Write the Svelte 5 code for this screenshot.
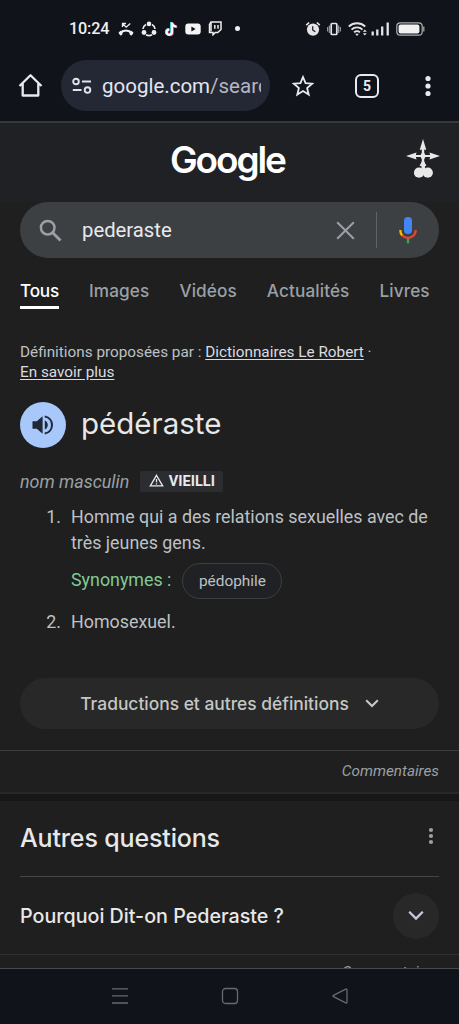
<script>
  const url = { host: 'google.com', path: '/searc' };
  const query = 'pederaste';
  const tabCount = 5;

  const tabs = [
    { id: 'all', label: 'Tous' },
    { id: 'images', label: 'Images' },
    { id: 'videos', label: 'Vidéos' },
    { id: 'news', label: 'Actualités' },
    { id: 'books', label: 'Livres' }
  ];
  let activeTab = $state('all');
</script>

<div class="screen">
  <div class="status-bar">
    <span class="clock">10:24</span>
    <div class="notifications">
      <svg width="16" height="16" viewBox="0 0 16 16">
        <path d="M1.500 12.300c4-3.500 9-3.500 13 0" fill="none" stroke="#eee" stroke-width="2.200" />
        <path d="M.5 11.800l2-2 2.300 1.600-.8 2.600-1.800.6zM15.500 11.800l-2-2-2.300 1.600.8 2.600 1.800.6z" fill="#eee" />
        <path d="M4.500 6V2.500H8M4.700 2.700L8.200 6.200 12.300 2.500" fill="none" stroke="#eee" stroke-width="1.300" />
      </svg>
      <svg width="16" height="16" viewBox="0 0 16 16">
        <path d="M5 3.500a6 6 0 0 0-3 4.500M11 3.500a6 6 0 0 1 3 4.500M5 13.800a6 6 0 0 0 6 0" fill="none" stroke="#eee" stroke-width="1.600" />
        <circle cx="8" cy="2.900" r="2.300" fill="#eee" />
        <circle cx="3" cy="11.500" r="2.400" fill="#eee" />
        <circle cx="13" cy="11.500" r="2.400" fill="#eee" />
      </svg>
      <svg width="14" height="16" viewBox="0 0 14 16">
        <path d="M7.200 1v9.700a2.600 2.600 0 1 1-2.600-2.600M7.200 1.500c.4 2.300 2 3.500 4.500 3.700" fill="none" stroke="#35d5d5" stroke-width="2.300" />
        <path d="M8.800 1.800v9.700a2.600 2.600 0 1 1-2.600-2.600M8.800 2.300c.4 2.300 2 3.500 4.500 3.700" fill="none" stroke="#d9365e" stroke-width="2.300" />
        <path d="M8 1.400v9.700a2.700 2.700 0 1 1-2.700-2.700M8 1.900c.4 2.300 2 3.500 4.500 3.700" fill="none" stroke="#fff" stroke-width="2.200" />
      </svg>
      <svg width="16" height="12" viewBox="0 0 16 12">
        <rect x=".3" y=".5" width="15.400" height="11" rx="3" fill="#f4f4f4" />
        <path d="M6.400 3.500v5l4.200-2.500z" fill="#10131a" />
      </svg>
      <svg width="14" height="15" viewBox="0 0 14 15">
        <path d="M3 1h10v7.500L9.800 11.500H7.300L5 13.800v-2.300H1.500V3.500z" fill="none" stroke="#eee" stroke-width="1.500" />
        <path d="M3 1.500v9M6.800 4v3.800M10 4v3.800" stroke="#eee" stroke-width="1.500" />
      </svg>
      <span class="dot"></span>
    </div>
    <div class="system">
      <svg width="16" height="16" viewBox="0 0 16 16">
        <circle cx="8" cy="8.600" r="6.100" fill="#e4e4e6" />
        <path d="M1.200 4.200l3-2.700M14.800 4.200l-3-2.700" stroke="#e4e4e6" stroke-width="1.600" />
        <path d="M7.700 5.300v3.700l2.600 1.700" fill="none" stroke="#10131a" stroke-width="1.200" />
      </svg>
      <svg width="14" height="14" viewBox="0 0 14 14">
        <rect x="4.200" y="1.500" width="5.600" height="11" rx=".8" fill="none" stroke="#e4e4e6" stroke-width="1.700" />
        <path d="M.7 5v4.500M13.300 5v4.500M2.300 3.500v7.500M11.700 3.500v7.500" stroke="#c4c4c6" stroke-width=".9" />
      </svg>
      <svg width="20" height="16" viewBox="0 0 20 16">
        <path d="M.8 5.500a12 12 0 0 1 16.400 0M3.500 8.600a8 8 0 0 1 11 0M6.100 11.400a4.200 4.200 0 0 1 5.800 0" fill="none" stroke="#e4e4e6" stroke-width="1.900" />
        <path d="M7.200 12.800h3.600L9 15z" fill="#e4e4e6" />
        <path d="M14.800 10.800h4l-2-2.300zM14.800 12.300h4l-2 2.300z" fill="#e4e4e6" />
      </svg>
      <svg width="19" height="14" viewBox="0 0 19 14">
        <path d="M1.700 9.500v4M6.300 7.500v6M11.200 4.500v9M16.700.5v13" stroke="#e4e4e6" stroke-width="2.300" />
      </svg>
      <svg width="29" height="14" viewBox="0 0 29 14">
        <rect x=".8" y=".8" width="25.400" height="12.400" rx="3.500" fill="none" stroke="#aeb0b5" stroke-width="1.200" />
        <rect x="2.600" y="2.600" width="20.800" height="8.800" rx="2" fill="#f1f1f1" />
        <path d="M27.800 4.500v5" stroke="#aeb0b5" stroke-width="1.200" />
      </svg>
    </div>
  </div>

  <div class="toolbar">
    <svg width="25" height="25" viewBox="0 0 25 25">
      <path d="M1.500 13L12.500 2.300 23.500 13M4.700 10.500v12h15.600v-12" fill="none" stroke="#e7eaf3" stroke-width="2.300" stroke-linejoin="round" />
    </svg>
    <div class="url-bar">
      <svg width="20" height="18" viewBox="0 0 20 18">
        <g fill="none" stroke="#e0e3ec" stroke-width="1.900">
          <circle cx="4" cy="4.500" r="2.800" />
          <circle cx="15.500" cy="13" r="2.800" />
          <path d="M10 4.500h9M.8 13h8.700" />
        </g>
      </svg>
      <span class="url">{url.host}<span class="path">{url.path}</span></span>
    </div>
    <svg class="star" width="24" height="24" viewBox="0 0 24 24">
      <path d="M12 3l2.550 6.200 6.600.5-5.050 4.350 1.600 6.500L12 17.100l-5.700 3.450 1.600-6.500L2.850 9.700l6.600-.5z" fill="none" stroke="#e7eaf3" stroke-width="1.800" />
    </svg>
    <div class="tab-count">{tabCount}</div>
    <svg class="menu" width="6" height="22" viewBox="0 0 6 22">
      <g fill="#e7eaf3">
        <circle cx="3" cy="3.500" r="2.600" />
        <circle cx="3" cy="11" r="2.600" />
        <circle cx="3" cy="18.500" r="2.600" />
      </g>
    </svg>
  </div>

  <div class="page">
    <header class="masthead">
      <div class="logo">Google</div>
      <svg width="34" height="40" viewBox="0 0 34 40">
        <g fill="#e8e8e8">
          <path d="M17 0l3.300 11-2.100-.6V28h-2.400V10.400l-2.100.6z" />
          <path d="M0 17l10.500-3.600-.6 2.500h14.200l-.6-2.500L34 17l-10.500 3.600.6-2.500H9.900l.6 2.500z" />
          <path d="M17 12l3 5-3 5-3-5zM17 20l3.500 7h-7z" />
          <circle cx="13" cy="33.700" r="5.100" />
          <circle cx="21.800" cy="33.700" r="5.100" />
          <path d="M15.500 26h3.500v10h-3.500z" />
        </g>
      </svg>
    </header>

    <div class="search">
      <svg width="23" height="23" viewBox="0 0 23 23">
        <circle cx="8.700" cy="8.700" r="6.800" fill="none" stroke="#9aa0a6" stroke-width="2.500" />
        <path d="M13.500 13.500l8 8" stroke="#9aa0a6" stroke-width="2.800" />
      </svg>
      <span class="query">{query}</span>
      <svg width="19" height="19" viewBox="0 0 19 19">
        <path d="M1.200 1.200l16.600 16.600M17.800 1.200L1.200 17.800" stroke="#9aa0a6" stroke-width="2" />
      </svg>
      <span class="separator"></span>
      <svg width="18" height="27" viewBox="0 0 18 27">
        <path d="M9 20v6.300" stroke="#34a853" stroke-width="2.300" />
        <path d="M1.300 13a7.800 7.800 0 0 0 2.200 5.700" fill="none" stroke="#fbbc04" stroke-width="2.300" />
        <path d="M3.200 18.300A7.800 7.800 0 0 0 16.700 13" fill="none" stroke="#ea4335" stroke-width="2.300" />
        <rect x="5" y="0" width="8" height="17" rx="4" fill="#4285f4" />
      </svg>
    </div>

    <nav class="tabs">
      {#each tabs as tab}
        <button class="tab" class:active={tab.id === activeTab} onclick={() => (activeTab = tab.id)}>{tab.label}</button>
      {/each}
    </nav>

    <section class="definition">
      <p class="source">
        Définitions proposées par : <a href="#robert">Dictionnaires Le Robert</a> ·<br />
        <a href="#more">En savoir plus</a>
      </p>

      <div class="word-row">
        <button class="speaker" aria-label="Écouter">
          <svg width="24" height="24" viewBox="0 0 24 24">
            <path d="M1.500 8.300v7.400h4.300l5.800 5V3.300l-5.800 5z" fill="#202735" />
            <path d="M13.800 7.500c4 1.700 4 7.300 0 9z" fill="#202735" />
            <path d="M13.800 3.500c9.600 1.500 9.600 15.500 0 17" fill="none" stroke="#202735" stroke-width="2" />
          </svg>
        </button>
        <h1>pédéraste</h1>
      </div>

      <div class="grammar">
        <em>nom masculin</em>
        <span class="badge">
          <svg width="15" height="14" viewBox="0 0 15 14">
            <path d="M7.500 1.300L13.700 11.800H1.300z" fill="none" stroke="#e8eaed" stroke-width="1.300" />
            <path d="M7.500 5v3.300M7.500 9.200v1.300" stroke="#e8eaed" stroke-width="1.300" />
          </svg>
          <b>VIEILLI</b>
        </span>
      </div>

      <div class="senses">
        <div class="sense">
          <span>1.</span>
          <div>
            Homme qui a des relations sexuelles avec de très jeunes gens.
            <div class="synonyms">
              <span class="syn-label">Synonymes :</span>
              <span class="chip">pédophile</span>
            </div>
          </div>
        </div>
        <div class="sense">
          <span>2.</span>
          <div>Homosexuel.</div>
        </div>
      </div>

      <button class="more">
        <span>Traductions et autres définitions</span>
        <svg width="14" height="9" viewBox="0 0 14 9">
          <path d="M1.200 1.200L7 7l5.800-5.800" fill="none" stroke="#c4c7c5" stroke-width="2.100" />
        </svg>
      </button>
    </section>

    <div class="feedback"><em>Commentaires</em></div>

    <section class="questions">
      <div class="questions-head">
        <h2>Autres questions</h2>
        <svg width="6" height="18" viewBox="0 0 6 18">
          <g fill="#9aa0a6">
            <circle cx="3" cy="3" r="2.100" />
            <circle cx="3" cy="9" r="2.100" />
            <circle cx="3" cy="15" r="2.100" />
          </g>
        </svg>
      </div>
      <div class="question">
        <span>Pourquoi Dit-on Pederaste ?</span>
        <button class="expand" aria-label="Afficher">
          <svg width="16" height="11" viewBox="0 0 16 11">
            <path d="M1.200 1.700L8 8.500l6.800-6.800" fill="none" stroke="#cbc8dc" stroke-width="2.300" />
          </svg>
        </button>
      </div>
    </section>

    <div class="feedback last"><em>Commentaires</em></div>
  </div>

  <div class="nav-bar">
    <svg width="18" height="18" viewBox="0 0 18 18">
      <path d="M1 1.800h16M1 8.900h16M1 16h16" stroke="#686a70" stroke-width="1.300" />
    </svg>
    <svg width="18" height="18" viewBox="0 0 18 18">
      <rect x="1.500" y="1.500" width="15" height="15" rx="3" fill="none" stroke="#686a70" stroke-width="1.300" />
    </svg>
    <svg width="18" height="18" viewBox="0 0 18 18">
      <path d="M16 3v12q0 1.500-1.300.8L2.500 9.700q-1.200-.7 0-1.400L14.700 2.200Q16 1.500 16 3z" fill="none" stroke="#686a70" stroke-width="1.300" />
    </svg>
  </div>
</div>

<style>
  :global(body) {
    margin: 0;
    background: #1f1f1f;
  }

  .screen {
    width: 459px;
    height: 1024px;
    display: flex;
    flex-direction: column;
    overflow: hidden;
    background: #10131a;
    color: #bdc1c6;
    font-family: Roboto, 'Liberation Sans', sans-serif;
  }

  svg {
    display: block;
    flex: none;
  }

  button {
    border: 0;
    padding: 0;
    background: none;
    color: inherit;
    font: inherit;
  }

  .status-bar {
    height: 57px;
    flex: none;
    display: flex;
    align-items: center;
    padding: 0 34px 0 69px;
  }

  .clock {
    width: 49px;
    color: #f0f0f0;
    font-size: 16.2px;
    font-weight: 500;
    letter-spacing: -0.15px;
  }

  .notifications {
    display: flex;
    align-items: center;
    gap: 7px;
  }

  .dot {
    width: 5px;
    height: 5px;
    margin-left: 6px;
    border-radius: 50%;
    background: #f0f0f0;
  }

  .system {
    display: flex;
    align-items: center;
    gap: 6px;
    margin-left: auto;
  }

  .system svg:nth-child(2) {
    margin-right: 1px;
  }

  .system svg:nth-child(4) {
    margin-left: -3px;
  }

  .toolbar {
    height: 64px;
    flex: none;
    display: flex;
    align-items: center;
    padding: 0 28px 7px 18px;
    box-sizing: border-box;
  }

  .url-bar {
    width: 209px;
    height: 51px;
    margin-left: 18px;
    padding: 0 9px 0 11px;
    box-sizing: border-box;
    display: flex;
    align-items: center;
    gap: 10px;
    border-radius: 26px;
    background: #242834;
  }

  .url {
    flex: 1;
    overflow: hidden;
    white-space: nowrap;
    color: #e3e6ef;
    font-size: 20.5px;
    line-height: 28px;
  }

  .path {
    color: #b4b7c2;
  }

  .star {
    margin: 1px 0 0 21px;
  }

  .tab-count {
    width: 24px;
    height: 24px;
    margin-left: 40px;
    box-sizing: border-box;
    border: 2px solid #e7eaf3;
    border-radius: 6px;
    color: #e7eaf3;
    font-size: 14px;
    font-weight: 700;
    line-height: 20px;
    text-align: center;
  }

  .menu {
    margin-left: auto;
  }

  .page {
    height: 848px;
    flex: none;
    overflow: hidden;
    box-sizing: border-box;
    border-top: 2px solid #36383d;
    border-bottom: 1px solid #46484c;
    background: #1f1f1f;
  }

  .masthead {
    height: 79px;
    box-sizing: border-box;
    padding: 0 19px 8px 170px;
    display: flex;
    align-items: center;
    justify-content: space-between;
    background: #202124;
  }

  .logo {
    padding-top: 2px;
    color: #fff;
    font-family: Inter, sans-serif;
    font-size: 37px;
    font-weight: 600;
    letter-spacing: -2.1px;
    line-height: 46px;
  }

  .search {
    height: 56px;
    margin: 0 20px;
    padding: 0 22px 0 19px;
    display: flex;
    align-items: center;
    border-radius: 28px;
    background: #3c4043;
  }

  .query {
    flex: 1;
    margin-left: 20px;
    color: #e8eaed;
    font-size: 20.3px;
  }

  .separator {
    width: 1px;
    height: 36px;
    margin: 0 22px 0 21px;
    background: #5f6368;
  }

  .tabs {
    height: 51px;
    padding-left: 20px;
    display: flex;
    align-items: flex-end;
    gap: 30px;
    color: #9aa0a6;
    font-family: Inter, sans-serif;
    font-size: 17.2px;
    font-weight: 500;
    line-height: 30px;
  }

  .tab {
    border-bottom: 3px solid transparent;
    letter-spacing: 0.1px;
  }

  .tab.active {
    border-bottom-color: #fff;
    color: #fff;
    letter-spacing: -0.2px;
  }

  .definition {
    height: 441px;
    box-sizing: border-box;
    padding: 33px 20px 0;
  }

  .source {
    margin: 0;
    font-size: 15.3px;
    line-height: 20px;
    white-space: nowrap;
  }

  .source a {
    color: #dadce0;
    text-underline-offset: 2px;
  }

  .word-row {
    margin-top: 20px;
    display: flex;
    align-items: center;
    gap: 15px;
  }

  .speaker {
    width: 46px;
    height: 46px;
    border-radius: 50%;
    display: flex;
    align-items: center;
    justify-content: center;
    background: #a8c7fa;
  }

  h1 {
    margin: 0;
    padding-bottom: 4px;
    color: #e8e8e8;
    font-family: Inter, sans-serif;
    font-size: 29.5px;
    font-weight: 400;
    line-height: 40px;
  }

  .grammar {
    margin-top: 22px;
    height: 22px;
    display: flex;
    align-items: center;
    gap: 11px;
    color: #9aa0a6;
    font-size: 17.9px;
  }

  .badge {
    width: 83px;
    height: 21px;
    display: flex;
    align-items: center;
    justify-content: center;
    gap: 5px;
    border-radius: 2px;
    background: #2b2d31;
    color: #e8eaed;
    font-size: 14.5px;
  }

  .senses {
    margin-top: 12px;
    font-size: 17.85px;
    line-height: 26px;
  }

  .sense {
    display: grid;
    grid-template-columns: 41px 1fr;
    column-gap: 10px;
  }

  .sense > span {
    text-align: right;
  }

  .synonyms {
    margin: 7px 0 10px;
    height: 36px;
    display: flex;
    align-items: center;
    gap: 11px;
  }

  .syn-label {
    color: #81c995;
    margin-top: -3px;
  }

  .chip {
    width: 100px;
    height: 36px;
    box-sizing: border-box;
    border: 1.5px solid #3c4043;
    border-radius: 18px;
    background: #202124;
    font-size: 15.4px;
    line-height: 34px;
    text-align: center;
  }

  .more {
    width: 100%;
    height: 51px;
    margin-top: 43px;
    display: flex;
    align-items: center;
    justify-content: center;
    gap: 16px;
    border-radius: 26px;
    background: #282828;
    color: #c4c7c5;
    font-family: Inter, sans-serif;
    font-size: 17.4px;
    font-weight: 500;
  }

  .feedback {
    height: 41px;
    padding-right: 20px;
    border-top: 1px solid #3c3d3f;
    border-bottom: 2px solid #272727;
    text-align: right;
    color: #9aa0a6;
    font-size: 15.3px;
    line-height: 41px;
  }

  .questions {
    height: 153px;
    padding: 0 20px;
    border-top: 7px solid #171717;
  }

  .questions-head {
    height: 75px;
    display: flex;
    align-items: center;
    justify-content: space-between;
    padding-right: 5px;
    border-bottom: 1px solid #444648;
  }

  .questions-head svg {
    margin-bottom: 5px;
  }

  h2 {
    margin: 0;
    padding-bottom: 2px;
    color: #e8e8e8;
    font-family: Inter, sans-serif;
    font-size: 25px;
    font-weight: 500;
    letter-spacing: -0.15px;
  }

  .question {
    height: 77px;
    display: flex;
    align-items: center;
    justify-content: space-between;
    color: #e8e8e8;
    font-family: Inter, sans-serif;
    font-size: 19.7px;
    font-weight: 500;
  }

  .expand {
    width: 46px;
    height: 46px;
    border-radius: 50%;
    display: flex;
    align-items: center;
    justify-content: center;
    background: #282828;
  }

  .feedback.last {
    border-top-color: #303132;
    line-height: 34px;
  }

  .nav-bar {
    flex: 1;
    display: flex;
    align-items: center;
    justify-content: center;
    gap: 92px;
    padding-bottom: 1px;
  }
</style>
